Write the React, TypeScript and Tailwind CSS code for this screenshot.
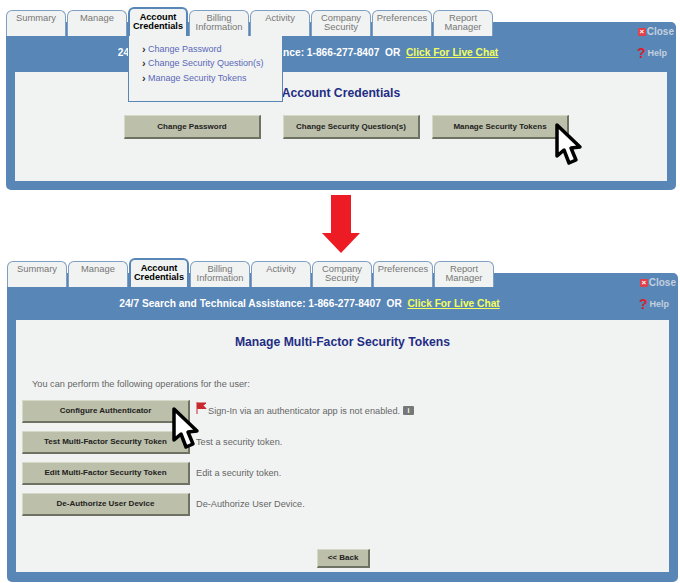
import React from 'react';

const tabs = [
  ['Summary'],
  ['Manage'],
  ['Account', 'Credentials'],
  ['Billing', 'Information'],
  ['Activity'],
  ['Company', 'Security'],
  ['Preferences'],
  ['Report', 'Manager'],
];

function Cursor({ className }: { className: string }) {
  return (
    <svg className={className} width="30" height="46" viewBox="0 0 30 46">
      <path
        d="M4 4 L4 35 L11 29 L16 42 L23 39 L18 27 L27 26 Z"
        fill="#fff"
        stroke="#000"
        strokeWidth="3.5"
        strokeLinejoin="round"
      />
    </svg>
  );
}

function TabBar() {
  return (
    <div className="relative z-10 flex h-[29px] items-end gap-px">
      {tabs.map((lines) => {
        const active = lines[0] === 'Account';
        return (
          <div
            key={lines[0]}
            className={
              active
                ? 'h-[29px] w-[60px] rounded-t-[6px] border-2 border-b-0 border-[#5886b7] bg-[#f1f3f2] pt-[4px] text-center text-[9.2px] leading-[9px] font-bold text-black'
                : 'h-[26px] w-[60px] rounded-t-[6px] border border-b-0 border-[#7f9fc2] bg-[#f1f3f2] pt-[2px] text-center text-[9.4px] leading-[9px] text-[#777]'
            }
          >
            {lines.map((l) => (
              <div key={l} className="h-[9px]">{l}</div>
            ))}
          </div>
        );
      })}
    </div>
  );
}

function HeaderBar({ height }: { height: string }) {
  return (
    <div className={`relative flex justify-center pr-[66px] pt-[25px] text-[10.2px] leading-[12px] font-bold text-white ${height}`}>
      <span className="whitespace-pre">24/7 Search and Technical Assistance: 1-866-277-8407  OR  </span>
      <span className="text-[#f2ff5e] underline">Click For Live Chat</span>
      <div className="absolute right-[-7px] top-[4px] flex h-[12px] items-center text-[10px] text-[#c3d0de]">
        <span className="mr-px flex h-[8px] w-[8px] items-center justify-center rounded-[1px] bg-[#e0404a] text-[8px] leading-none text-white">×</span>
        Close
      </div>
      <div className="absolute right-0 top-[25px] flex h-[12px] items-center text-[9px] text-[#c3d0de]">
        <span className="mr-[2px] text-[14px] leading-none text-[#d8202c]">?</span>
        Help
      </div>
    </div>
  );
}

function Btn({ label, className }: { label: string; className: string }) {
  return (
    <div
      className={`flex items-center justify-center border border-t-[#d6d8c8] border-l-[#d6d8c8] border-r-2 border-b-2 border-r-[#6e7262] border-b-[#6e7262] bg-[#bcbfa9] text-[8px] font-bold text-[#222] ${className}`}
    >
      {label}
    </div>
  );
}

const ops = [
  ['Configure Authenticator', 'Sign-In via an authenticator app is not enabled.'],
  ['Test Multi-Factor Security Token', 'Test a security token.'],
  ['Edit Multi-Factor Security Token', 'Edit a security token.'],
  ['De-Authorize User Device', 'De-Authorize User Device.'],
];

export default function App() {
  return (
    <div className="h-[583px] w-[680px] overflow-hidden bg-white pt-[7px] font-['Liberation_Sans',Arial,sans-serif]">
      {/* first window */}
      <div className="relative ml-[6px] w-[670px]">
        <TabBar />
        <div className="-mt-[14px] h-[168px] rounded-[5px] bg-[#5886b7] px-[9px]">
          <HeaderBar height="h-[50px]" />
          <div className="h-[109px] bg-[#f1f3f2] pt-[14px]">
            <div className="text-center text-[12.2px] leading-[14px] font-bold text-[#1f2d84]">Account Credentials</div>
            <div className="mt-[15px] flex pl-[109px]">
              <Btn label="Change Password" className="h-[24px] w-[137px]" />
              <Btn label="Change Security Question(s)" className="ml-[22px] h-[24px] w-[137px]" />
              <Btn label="Manage Security Tokens" className="ml-[12px] h-[24px] w-[137px]" />
            </div>
          </div>
        </div>
        <div className="absolute left-[122px] top-[29px] z-20 h-[66px] w-[155px] border border-t-0 border-[#5886b7] bg-[#f1f3f2] pl-[13px] pt-[6px]">
          {['Change Password', 'Change Security Question(s)', 'Manage Security Tokens'].map((t) => (
            <div key={t} className="flex h-[14.6px] items-center text-[9px] text-[#5a68b8]">
              <span className="mr-[2px] w-[4px] text-[11px] leading-none font-bold text-[#333]">›</span>
              {t}
            </div>
          ))}
        </div>
        <Cursor className="absolute left-[547px] top-[114px] z-30" />
      </div>

      {/* arrow */}
      <div className="flex h-[68px] justify-center pl-[2px]">
        <svg className="relative z-20 mt-[5px]" width="40" height="59" viewBox="0 0 40 59">
          <path d="M10 0 H30 V38 H39 L20 58 L1 38 H10 Z" fill="#ed1c24" />
        </svg>
      </div>

      {/* second window */}
      <div className="relative ml-[7px] w-[671px]">
        <TabBar />
        <div className="-mt-[14px] h-[309px] rounded-[5px] bg-[#5886b7] px-[9px]">
          <HeaderBar height="h-[47px]" />
          <div className="h-[252px] bg-[#f1f3f2] pt-[15px] text-[#666]">
            <div className="text-center text-[12.2px] leading-[14px] font-bold text-[#1f2d84]">Manage Multi-Factor Security Tokens</div>
            <div className="mt-[29px] pl-[16px] text-[9.2px] leading-[12px]">You can perform the following operations for the user:</div>
            <div className="mt-[10px] flex flex-col gap-[8px] pl-[6px]">
              {ops.map(([label, desc], i) => (
                <div key={label} className="flex items-center">
                  <Btn label={label} className="h-[23px] w-[168px]" />
                  <div className="ml-[6px] flex items-center text-[9.2px]">
                    {i === 0 && (
                      <svg className="-mt-[7px] mr-px" width="11" height="12" viewBox="0 0 11 12">
                        <path d="M1 0 V12 M1.5 1 L10 1 L7 3.5 L10 6.5 H1.5 Z" fill="#c8282e" stroke="#c8282e" strokeWidth="1" />
                      </svg>
                    )}
                    {desc}
                    {i === 0 && (
                      <span className="ml-[3px] -mt-[2px] flex h-[9px] w-[11px] items-center justify-center rounded-[1px] bg-[#777] text-[7px] font-bold leading-none text-white">i</span>
                    )}
                  </div>
                </div>
              ))}
            </div>
            <div className="mt-[33px] flex pl-[301px]">
              <Btn label="<< Back" className="h-[19px] w-[53px]" />
            </div>
          </div>
        </div>
        <Cursor className="absolute left-[163px] top-[147px] z-30" />
      </div>
    </div>
  );
}
